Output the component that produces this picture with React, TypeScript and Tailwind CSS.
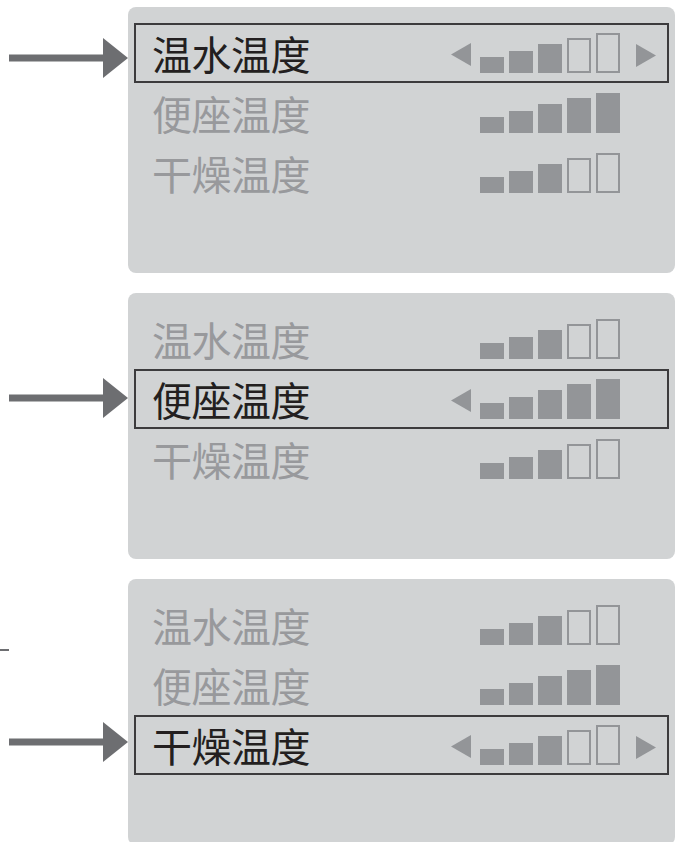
import React from "react";

type Row = { label: string; level: number };

const ROWS: Row[] = [
  { label: "温水温度", level: 3 },
  { label: "便座温度", level: 5 },
  { label: "干燥温度", level: 3 },
];

const BAR_HEIGHTS = ["h-[16px]", "h-[22px]", "h-[29px]", "h-[35px]", "h-[40px]"];

function Arrow() {
  return (
    <svg width="128" height="40" viewBox="0 0 128 40" className="block">
      <rect x="9" y="16.5" width="95" height="7" fill="#6d6e71" />
      <polygon points="103,0 128,20 103,40" fill="#6d6e71" />
    </svg>
  );
}

function Level({ level, active, showRight }: { level: number; active: boolean; showRight: boolean }) {
  return (
    <div className="flex items-center">
      <svg width="20" height="23" viewBox="0 0 20 23" className={`mt-[3px] ${active ? "" : "invisible"}`}>
        <polygon points="20,0 0,11.5 20,23" fill="#939598" />
      </svg>
      <div className="ml-[9px] flex items-end gap-[5px] h-[40px]">
        {BAR_HEIGHTS.map((h, i) => (
          <div
            key={i}
            className={`w-[24px] ${h} ${
              i < level ? "bg-[#939598]" : "border-2 border-[#939598] bg-transparent"
            }`}
          />
        ))}
      </div>
      <svg
        width="20"
        height="23"
        viewBox="0 0 20 23"
        className={`ml-[16px] mt-[5px] ${active && showRight ? "" : "invisible"}`}
      >
        <polygon points="0,0 20,11.5 0,23" fill="#939598" />
      </svg>
    </div>
  );
}

function Panel({ selected, arrowNudge, stray }: { selected: number; arrowNudge: string; stray?: boolean }) {
  return (
    <div className="flex h-[266px] shrink-0">
      {/* left column with pointer arrow */}
      <div className="w-[128px] shrink-0 flex flex-col pt-[16px]">
        {ROWS.map((r, i) => (
          <div key={r.label} className="h-[60px] relative flex flex-col justify-center">
            {i === selected && (
              <div className={arrowNudge}>
                <Arrow />
              </div>
            )}
            {stray && i === 0 && <div className="absolute left-0 top-[54px] w-[9px] h-[2px] bg-[#6d6e71]" />}
          </div>
        ))}
      </div>

      {/* display panel */}
      <div className="flex-1 mr-[1px] bg-[#d1d3d4] rounded-lg pt-[16px] px-[6px]">
        {ROWS.map((r, i) => {
          const active = i === selected;
          return (
            <div
              key={r.label}
              className={`h-[60px] flex items-center justify-between pl-[16px] pr-[11px] border-2 ${
                active ? "border-[#3c3b3d]" : "border-transparent"
              }`}
            >
              <span
                className={`text-[40px] leading-none tracking-[-0.5px] ${
                  active ? "text-[#231f20]" : "text-[#98999c]"
                }`}
                style={{ fontFamily: '"Noto Sans CJK SC", "Noto Sans CJK JP", sans-serif' }}
              >
                {r.label}
              </span>
              <Level level={r.level} active={active} showRight={r.level < 5} />
            </div>
          );
        })}
      </div>
    </div>
  );
}

export default function App() {
  return (
    <div className="w-[676px] h-[842px] overflow-hidden bg-white pt-[7px] flex flex-col gap-[20px]">
      <Panel selected={0} arrowNudge="mt-[10px]" />
      <Panel selected={1} arrowNudge="-mt-[2px]" />
      <Panel selected={2} arrowNudge="-mt-[6px]" stray />
    </div>
  );
}
